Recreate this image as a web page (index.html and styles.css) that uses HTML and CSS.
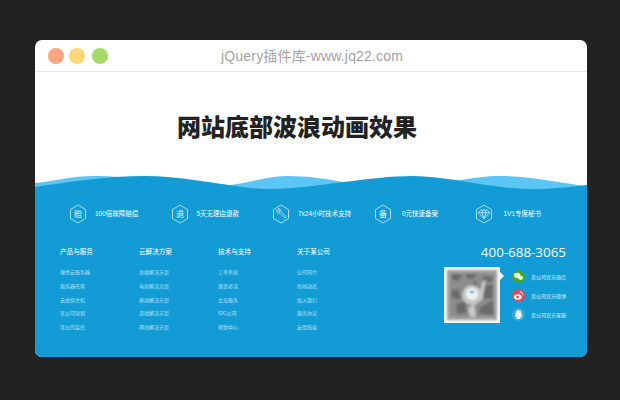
FILE: index.html
```html
<!DOCTYPE html>
<html lang="zh-CN">
<head>
  <meta charset="UTF-8">
  <title>网站底部波浪动画效果</title>
  <link rel="stylesheet" href="styles.css">
</head>
<body>
  <div class="window">
    <div class="titlebar">
      <span class="dot dot-red"></span>
      <span class="dot dot-yellow"></span>
      <span class="dot dot-green"></span>
      <span class="site-name">jQuery插件库-www.jq22.com</span>
    </div>

    <div class="hero">
      <h1>网站底部波浪动画效果</h1>
    </div>

    <svg class="waves" viewBox="0 0 552 20" width="552" height="20">
      <path fill="#5bc6f5" d="M0 11C20 9 38 4 58 4C95 4 150 11 195 13C215 11 232 4 252 4C275 4 290 7 308 10C350 14 390 8 425 8C440 6 450 4 465 4C495 4 525 11 552 14V20H0Z"/>
      <path fill="#129bd5" d="M0 15C35 10 70 4 110 4C145 4 175 11 215 16C250 19 275 14 308 10C335 7 355 4 378 4C415 4 455 17 498 17C515 17 535 15 552 13V20H0Z"/>
    </svg>

    <div class="footer">
      <ul class="features">
        <li>
          <svg class="hex" viewBox="0 0 18 20"><path d="M9 1L16.5 5.5V14.5L9 19L1.5 14.5V5.5Z"/><text x="9" y="13" text-anchor="middle">赔</text></svg>
          100倍故障赔偿
        </li>
        <li>
          <svg class="hex" viewBox="0 0 18 20"><path d="M9 1L16.5 5.5V14.5L9 19L1.5 14.5V5.5Z"/><text x="9" y="13" text-anchor="middle">退</text></svg>
          5天无理由退款
        </li>
        <li>
          <svg class="hex" viewBox="0 0 18 20"><path d="M9 1L16.5 5.5V14.5L9 19L1.5 14.5V5.5Z"/><path d="M4.6 5.8L6.8 8L8 6.8L5.9 4.8C7.8 4.2 9.8 5.8 9.3 7.9L13.7 12.3C14.3 13 13.1 14.3 12.3 13.6L7.9 9.2C5.9 9.7 4 7.8 4.6 5.8Z"/></svg>
          7x24小时技术支持
        </li>
        <li class="wide">
          <svg class="hex" viewBox="0 0 18 20"><path d="M9 1L16.5 5.5V14.5L9 19L1.5 14.5V5.5Z"/><text x="9" y="13" text-anchor="middle">备</text></svg>
          0元快速备案
        </li>
        <li class="wide">
          <svg class="hex" viewBox="0 0 18 20"><path d="M9 1L16.5 5.5V14.5L9 19L1.5 14.5V5.5Z"/><path d="M5.8 6H12.2L14.5 8.8L9 14.8L3.5 8.8ZM3.5 8.8H14.5M7 8.8L9 14.8L11 8.8M7 8.8L8 6M11 8.8L10 6"/></svg>
          1V1专席秘书
        </li>
      </ul>

      <div class="bottom">
        <div class="links">
          <div class="col">
            <h3>产品与服务</h3>
            <a>弹性云服务器</a>
            <a>服务器托管</a>
            <a>云虚拟主机</a>
            <a>某公司营销</a>
            <a>某公司监控</a>
          </div>
          <div class="col">
            <h3>云解决方案</h3>
            <a>金融解决方案</a>
            <a>电商解决方案</a>
            <a>移动解决方案</a>
            <a>游戏解决方案</a>
            <a>网站解决方案</a>
          </div>
          <div class="col">
            <h3>技术与支持</h3>
            <a>工单系统</a>
            <a>备案必读</a>
            <a>会员服务</a>
            <a>IDC公司</a>
            <a>帮助中心</a>
          </div>
          <div class="col">
            <h3>关于某公司</h3>
            <a>公司简介</a>
            <a>新闻动态</a>
            <a>加入我们</a>
            <a>服务协议</a>
            <a>友情链接</a>
          </div>
        </div>

        <div class="contact">
          <div class="phone">400-688-3065</div>
          <div class="contact-row">
            <div class="qr">
              <svg viewBox="0 0 56 56" width="56" height="56">
                <defs><filter id="soft"><feGaussianBlur stdDeviation="1"/></filter></defs>
                <rect width="56" height="56" fill="#f6f6f6"/>
                <g filter="url(#soft)">
                  <rect x="3" y="3" width="50" height="50" fill="#a2a2a2"/>
                  <rect x="6" y="6" width="44" height="44" fill="#8c8c8c"/>
                  <path fill="#6a6a6a" d="M8 7L18 8L14 14L8 12ZM22 7L33 7L29 12L22 11ZM31 13L36 24L27 24ZM39 9L50 10L47 15L39 14ZM7 24L14 22L17 32L8 31ZM42 18L49 18L48 32L39 31ZM12 37L21 35L23 46L13 47ZM36 40L49 34L50 48L35 47Z"/>
                  <circle cx="28" cy="28" r="10" fill="#c6c6c6"/>
                  <circle cx="28" cy="27" r="6" fill="#f0f3f5"/>
                  <path fill="#c8c8c8" d="M38 16L42 12L38 34L35 32ZM24 42L30 36L32 50L26 50Z"/>
                </g>
                <ellipse cx="28" cy="25" rx="2.6" ry="1.6" fill="#7cc8ee"/>
              </svg>
              <span class="qr-arrow"></span>
            </div>
            <ul class="socials">
              <li>
                <svg class="social" viewBox="0 0 13 13"><circle cx="6.5" cy="6.5" r="6.5" fill="#43a92e"/><ellipse cx="5.2" cy="5.3" rx="3.2" ry="2.6" fill="#fff"/><ellipse cx="8.6" cy="7.8" rx="2.6" ry="2.1" fill="#dff3d8"/></svg>
                某公司官方微信
              </li>
              <li>
                <svg class="social" viewBox="0 0 13 13"><circle cx="6.5" cy="6.5" r="6.5" fill="#dc4b5c"/><ellipse cx="5.8" cy="8" rx="3.8" ry="2.7" fill="#fff"/><circle cx="5.6" cy="8.1" r="1.4" fill="#dc4b5c"/><path d="M7.8 3A2.4 2.4 0 0 1 10.7 5.9" fill="none" stroke="#fff" stroke-width="1"/></svg>
                某公司官方微博
              </li>
              <li>
                <svg class="social" viewBox="0 0 13 13"><circle cx="6.5" cy="6.5" r="6.5" fill="#3fa9d8"/><path fill="#e4f4fb" d="M6.5 2C8.4 2 9.3 3.6 9.3 5.4C10 6.8 10.3 8.4 9.7 9L9 8.4C8.8 9.1 8.4 9.6 8.2 9.8L8.8 11H4.2L4.8 9.8C4.6 9.6 4.2 9.1 4 8.4L3.3 9C2.7 8.4 3 6.8 3.7 5.4C3.7 3.6 4.6 2 6.5 2Z"/></svg>
                某公司官方客服
              </li>
            </ul>
          </div>
        </div>
      </div>
    </div>
  </div>
</body>
</html>
```

FILE: styles.css
```css
* {
  box-sizing: border-box;
}

body {
  margin: 0;
  padding: 40px 33px 43px 35px;
  background: #222;
  font-family: "Liberation Sans", "Noto Sans CJK SC", sans-serif;
}

ul {
  list-style: none;
  margin: 0;
  padding: 0;
}

.window {
  width: 552px;
  height: 317px;
  background: #fff;
  border-radius: 7px;
  overflow: hidden;
  display: flex;
  flex-direction: column;
}

.titlebar {
  height: 32px;
  flex: none;
  display: flex;
  align-items: center;
  padding-left: 13px;
  border-bottom: 1px solid #e8e8e8;
  position: relative;
}

.dot {
  width: 16px;
  height: 16px;
  border-radius: 50%;
  margin-top: 1px;
}

.dot-red { background: #fba67c; }
.dot-yellow { background: #fbd778; margin: 1px 7px 0 5px; }
.dot-green { background: #a8d968; }

.site-name {
  position: absolute;
  left: 186px;
  top: 7px;
  font-size: 14px;
  line-height: 18px;
  letter-spacing: 0.18px;
  color: #a3a3a3;
  white-space: nowrap;
}

.hero {
  height: 100px;
  flex: none;
  display: flex;
  justify-content: center;
  padding: 38px 28px 0 0;
}

.hero h1 {
  margin: 0;
  font-size: 24px;
  line-height: 36px;
  font-weight: 900;
  color: #222;
}

.waves {
  display: block;
  flex: none;
}

.footer {
  flex: 1;
  background: #129bd5;
  color: #fff;
}

.features {
  display: flex;
  padding: 12px 0 0 34px;
}

.features li {
  width: 101.5px;
  display: flex;
  align-items: center;
  gap: 8px;
  font-size: 6.5px;
  line-height: 20px;
  white-space: nowrap;
  color: #fff;
}

.features li.wide {
  gap: 10.5px;
}

.hex {
  width: 18px;
  height: 20px;
  flex: none;
}

.hex path {
  fill: none;
  stroke: #cdeefb;
  stroke-width: 0.8;
}

.hex text {
  fill: #e6f6fd;
  font-size: 8px;
}

.bottom {
  display: flex;
  justify-content: space-between;
  padding: 22px 21px 0 25px;
}

.links {
  display: flex;
}

.col {
  width: 79px;
}

.col h3 {
  margin: 0 0 8px;
  font-size: 6.6px;
  line-height: 12px;
  font-weight: 400;
  color: #fff;
}

.col a {
  display: block;
  font-size: 5px;
  line-height: 13.8px;
  color: #b5e3f7;
}

.contact {
  display: flex;
  flex-direction: column;
  align-items: flex-end;
}

.phone {
  font-family: "Open Sans", sans-serif;
  font-size: 13.4px;
  line-height: 20px;
  color: #f4fbfe;
  margin-top: -4px;
}

.contact-row {
  display: flex;
  gap: 12px;
  margin-top: 5px;
}

.qr {
  width: 56px;
  height: 56px;
  position: relative;
}

.qr svg {
  display: block;
}

.qr-arrow {
  position: absolute;
  left: 56px;
  top: 5px;
  border: 4px solid transparent;
  border-left-color: #f6f6f6;
  border-right-width: 0;
}

.socials {
  padding-top: 3px;
}

.socials li {
  display: flex;
  align-items: center;
  gap: 6px;
  height: 13px;
  margin-bottom: 6px;
  font-size: 5px;
  color: #dff3fc;
  white-space: nowrap;
  width: 54px;
}

.social {
  width: 13px;
  height: 13px;
  flex: none;
}
```
